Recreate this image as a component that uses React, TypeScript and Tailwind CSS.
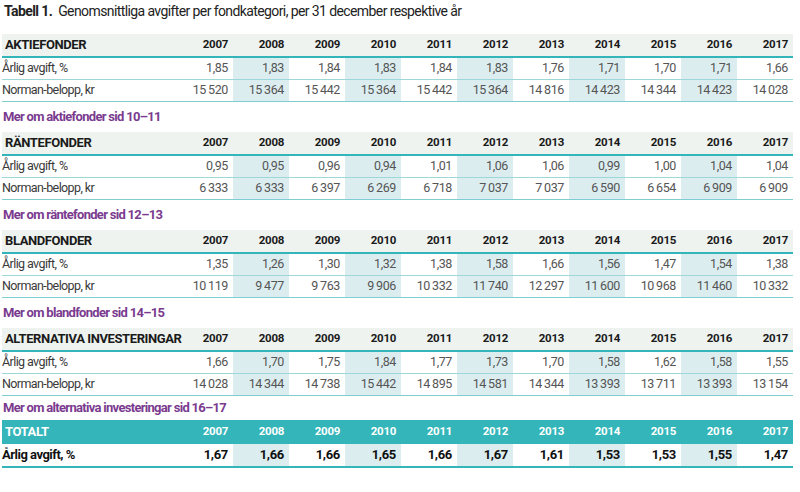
import React from "react";

const years = ["2007","2008","2009","2010","2011","2012","2013","2014","2015","2016","2017"];

type Section = { title: string; avg: string[]; norman: string[]; link: string };

const t = (s: string) => s.replace(/ /g, "\u2009");

const sections: Section[] = [
  {
    title: "AKTIEFONDER",
    avg: ["1,85","1,83","1,84","1,83","1,84","1,83","1,76","1,71","1,70","1,71","1,66"],
    norman: ["15 520","15 364","15 442","15 364","15 442","15 364","14 816","14 423","14 344","14 423","14 028"],
    link: "Mer om aktiefonder sid 10–11",
  },
  {
    title: "RÄNTEFONDER",
    avg: ["0,95","0,95","0,96","0,94","1,01","1,06","1,06","0,99","1,00","1,04","1,04"],
    norman: ["6 333","6 333","6 397","6 269","6 718","7 037","7 037","6 590","6 654","6 909","6 909"],
    link: "Mer om räntefonder sid 12–13",
  },
  {
    title: "BLANDFONDER",
    avg: ["1,35","1,26","1,30","1,32","1,38","1,58","1,66","1,56","1,47","1,54","1,38"],
    norman: ["10 119","9 477","9 763","9 906","10 332","11 740","12 297","11 600","10 968","11 460","10 332"],
    link: "Mer om blandfonder sid 14–15",
  },
  {
    title: "ALTERNATIVA INVESTERINGAR",
    avg: ["1,66","1,70","1,75","1,84","1,77","1,73","1,70","1,58","1,62","1,58","1,55"],
    norman: ["14 028","14 344","14 738","15 442","14 895","14 581","14 344","13 393","13 711","13 393","13 154"],
    link: "Mer om alternativa investeringar sid 16–17",
  },
];

const totalt = ["1,67","1,66","1,66","1,65","1,66","1,67","1,61","1,53","1,53","1,55","1,47"];

const font = { fontFamily: 'Roboto, "Liberation Sans", sans-serif' };

function HeaderRow({ title, dark }: { title: string; dark?: boolean }) {
  return (
    <div className={dark ? "flex h-[24px] items-center bg-[#33b5b9] text-white" : "flex h-[22px] items-center bg-[#eef3ef] text-[#1a1a1a]"}>
      <div className="w-[175px] whitespace-nowrap pl-[3px] text-[13px] font-bold tracking-[-0.4px]">{title}</div>
      {years.map((y) => (
        <div key={y} className="w-[56px] pr-[5px] text-right text-[11.5px] font-bold tracking-[-0.3px]">{y}</div>
      ))}
    </div>
  );
}

function DataRow({ label, values, bold, h = "h-[21px]" }: { label: string; values: string[]; bold?: boolean; h?: string }) {
  return (
    <div className={`flex ${h}`}>
      <div className={bold ? "flex w-[175px] items-center whitespace-nowrap text-[13px] font-bold tracking-[-0.5px] text-[#111]" : "flex w-[175px] items-center whitespace-nowrap text-[12.5px] tracking-[-0.6px] text-[#3a3a3a]"}>{label}</div>
      {values.map((v, i) => (
        <div
          key={i}
          className={
            (i % 2 === 1 ? "bg-[#dcedf0] " : "") +
            (bold
              ? "flex w-[56px] items-center justify-end whitespace-nowrap pr-[5px] text-[13px] font-bold tracking-[-0.3px] text-[#111]"
              : "flex w-[56px] items-center justify-end whitespace-nowrap pr-[5px] text-[12.5px] tracking-[-0.4px] text-[#555]")
          }
        >
          {t(v)}
        </div>
      ))}
    </div>
  );
}

export default function App() {
  return (
    <div className="h-[492px] w-[800px] overflow-hidden bg-white" style={font}>
      <div className="flex h-[22px] items-center whitespace-nowrap pl-[4px] text-[14px] tracking-[-0.6px] text-[#222]">
        <span className="font-bold">Tabell 1.</span>
        <span className="ml-[6px]">Genomsnittliga avgifter per fondkategori, per 31 december respektive år</span>
      </div>
      <div className="ml-[2px] mt-[12px] w-[791px]">
        {sections.map((s, idx) => (
          <div key={s.title}>
            <HeaderRow title={s.title} />
            <div className="h-[2px] bg-[#33b5b9]" />
            <DataRow label="Årlig avgift, %" values={s.avg} />
            <div className="h-[1px] bg-[#9dd7d9]" />
            <DataRow label="Norman-belopp, kr" values={s.norman} />
            <div className="h-[1px] bg-[#7ecdd0]" />
            <div className={idx === 3 ? "flex h-[24px] items-center whitespace-nowrap pl-[1px] text-[13px] font-bold tracking-[-0.7px] text-[#7a3b8f]" : "flex h-[30px] items-center whitespace-nowrap pl-[1px] text-[13px] font-bold tracking-[-0.7px] text-[#7a3b8f]"}>
              {s.link}
            </div>
          </div>
        ))}
        <HeaderRow title="TOTALT" dark />
        <DataRow label="Årlig avgift, %" values={totalt} bold h="h-[22px]" />
        <div className="h-[2px] bg-[#33b5b9]" />
      </div>
    </div>
  );
}
